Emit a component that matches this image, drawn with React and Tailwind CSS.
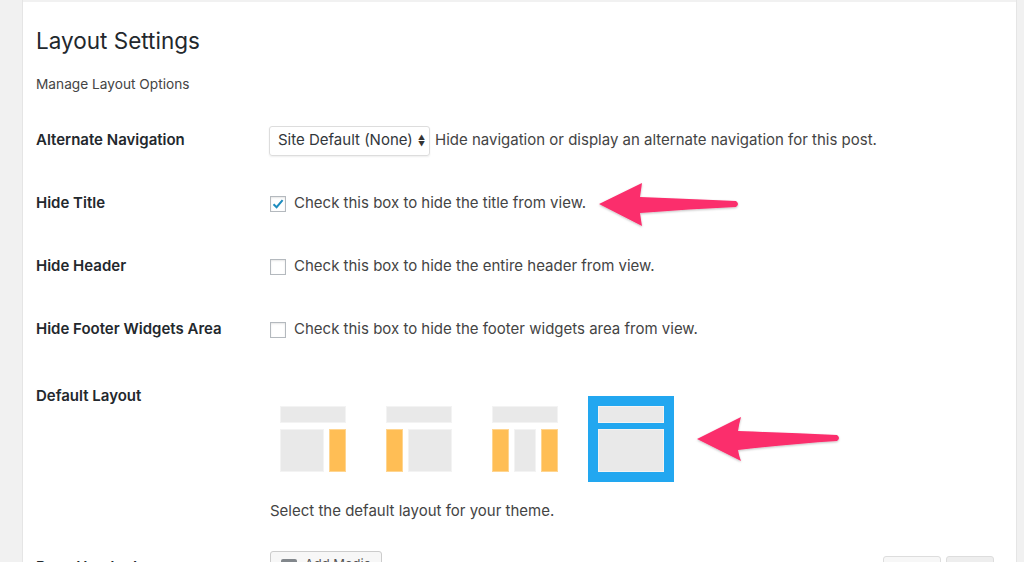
import React from 'react';

const font = { fontFamily: 'Inter, "Liberation Sans", Arial, sans-serif' };

function Checkbox({ checked }) {
  return (
    <span className="w-4 h-4 border border-[#b4b9be] bg-white shadow-[inset_0_1px_2px_rgba(0,0,0,0.1)] flex items-center justify-center shrink-0">
      {checked && (
        <svg width="14" height="14" viewBox="0 0 14 14">
          <path d="M2.5 7.2 L5.6 10.2 L11.6 3.2" fill="none" stroke="#1e8cbe" strokeWidth="2" />
        </svg>
      )}
    </span>
  );
}

function Row({ label, children }) {
  return (
    <div className="flex items-center h-[63px]">
      <div className="w-[234px] text-[15px] font-semibold text-[#23282d]">{label}</div>
      <div className="flex items-center gap-2 text-[15px] text-[#444]">{children}</div>
    </div>
  );
}

const gray = 'bg-[#e9e9e9] border border-[#f3f3f3]';
const orange = 'bg-[#ffbe55] border border-[#ffd590]';

function LayoutThumb({ kind, selected }) {
  return (
    <div className={`w-[86px] h-[86px] p-[10px] ${selected ? 'bg-[#22a7f0]' : ''}`}>
      <div className="flex flex-col gap-[6px] h-full">
        <div className={`h-[17px] ${gray} ${selected ? 'border-[#c9dbe8]' : ''}`} />
        <div className="flex flex-1 gap-[5px]">
          {kind === 'right' && (
            <>
              <div className={`flex-1 ${gray}`} />
              <div className={`w-[17px] ${orange}`} />
            </>
          )}
          {kind === 'left' && (
            <>
              <div className={`w-[17px] ${orange}`} />
              <div className={`flex-1 ${gray}`} />
            </>
          )}
          {kind === 'both' && (
            <>
              <div className={`w-[17px] ${orange}`} />
              <div className={`flex-1 ${gray}`} />
              <div className={`w-[17px] ${orange}`} />
            </>
          )}
          {kind === 'full' && <div className={`flex-1 ${gray} border-[#c9dbe8]`} />}
        </div>
      </div>
    </div>
  );
}

export default function App() {
  return (
    <div className="relative w-[1024px] h-[562px] overflow-hidden flex bg-[#f1f1f1]" style={font}>
      <div className="w-[22px] shrink-0" />
      <div className="w-[995px] shrink-0 bg-white border-l border-r border-[#e5e5e5] flex flex-col">
        <div className="h-[7px] border-b-2 border-[#f1f1f1]" />
        <div className="pl-[13px]">
          <h1 className="mt-[24px] text-[22.5px] leading-[30px] text-[#23282d]">Layout Settings</h1>
          <p className="mt-[19px] text-[13.7px] leading-[18px] text-[#444]">Manage Layout Options</p>
          <div className="mt-[16px]">
            <Row label="Alternate Navigation">
              <div className="flex items-center justify-between w-[161px] h-[30px] border border-[#ddd] rounded-[3px] shadow-[0_1px_2px_rgba(0,0,0,0.07)] pl-2 pr-[4px] text-[#32373c] -ml-[1px] whitespace-nowrap">
                <span>Site Default (None)</span>
                <span className="flex flex-col text-[7px] leading-[7px] text-[#333]">
                  <span>▲</span>
                  <span>▼</span>
                </span>
              </div>
              <span className="-ml-[3px]">Hide navigation or display an alternate navigation for this post.</span>
            </Row>
            <Row label="Hide Title">
              <Checkbox checked />
              <span>Check this box to hide the title from view.</span>
            </Row>
            <Row label="Hide Header">
              <Checkbox />
              <span>Check this box to hide the entire header from view.</span>
            </Row>
            <Row label="Hide Footer Widgets Area">
              <Checkbox />
              <span>Check this box to hide the footer widgets area from view.</span>
            </Row>
            <div className="flex pt-[26px]">
              <div className="w-[234px] text-[15px] leading-[18px] font-semibold text-[#23282d]">Default Layout</div>
              <div className="flex flex-col">
                <div className="flex gap-[20px] mt-[9px]">
                  <LayoutThumb kind="right" />
                  <LayoutThumb kind="left" />
                  <LayoutThumb kind="both" />
                  <LayoutThumb kind="full" selected />
                </div>
                <p className="mt-[19px] text-[15px] leading-[20px] text-[#444]">Select the default layout for your theme.</p>
              </div>
            </div>
            <div className="flex mt-[30px]">
              <div className="w-[234px] pt-[5px] text-[15px] font-semibold text-[#23282d] whitespace-nowrap">Page Header Image</div>
              <div className="flex items-center gap-2 h-[28px] w-[112px] px-[10px] border border-[#ccc] rounded-[3px] bg-[#f7f7f7] text-[13px] text-[#555] whitespace-nowrap">
                <span className="w-4 h-3 bg-[#82878c] rounded-[2px]" />
                Add Media
              </div>
              <div className="flex-1" />
              <div className="flex gap-[5px] mt-[5px] mr-[22px]">
                <div className="w-[58px] h-[28px] border border-[#ddd] rounded-[3px] bg-[#f7f7f7]" />
                <div className="w-[48px] h-[28px] border border-[#ddd] rounded-[3px] bg-[#eeeeee]" />
              </div>
            </div>
          </div>
        </div>
      </div>
      <svg className="absolute inset-0 pointer-events-none" width="1024" height="562" viewBox="0 0 1024 562">
        <defs>
          <filter id="arrowShadow" x="-10%" y="-30%" width="120%" height="160%">
            <feDropShadow dx="0" dy="1" stdDeviation="1" floodColor="#000" floodOpacity="0.25" />
          </filter>
        </defs>
        <path
          d="M599 204 L642 183 Q641 190 640 197 Q690 199 736 201 Q740 204 736 207 Q690 209 640 213 Q641 220 642 226 Z"
          fill="#fb2d6c"
          filter="url(#arrowShadow)"
        />
        <path
          d="M697 439 L741 417 Q739 424 738 431 Q790 433 837 435 Q841 438 837 441 Q790 444 738 450 Q739 456 741 461 Z"
          fill="#fb2d6c"
          filter="url(#arrowShadow)"
        />
      </svg>
    </div>
  );
}
